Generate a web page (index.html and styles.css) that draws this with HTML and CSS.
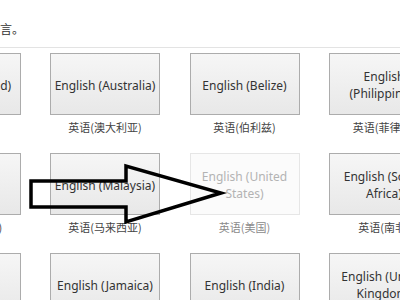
FILE: index.html
```html
<!DOCTYPE html>
<html lang="zh-CN">
<head>
  <meta charset="UTF-8">
  <title>语言</title>
  <link rel="stylesheet" href="styles.css">
</head>
<body>

<div class="intro">言。</div>

<div class="grid">
  <div class="cell">
    <div class="tile">English (Ireland)</div>
    <div class="label">英语(爱尔兰)</div>
  </div>
  <div class="cell">
    <div class="tile">English (Australia)</div>
    <div class="label">英语(澳大利亚)</div>
  </div>
  <div class="cell">
    <div class="tile">English (Belize)</div>
    <div class="label">英语(伯利兹)</div>
  </div>
  <div class="cell">
    <div class="tile">English<br>(Philippines)</div>
    <div class="label">英语(菲律宾)</div>
  </div>

  <div class="cell">
    <div class="tile">English<br>(Singapore)</div>
    <div class="label">英语(新加坡语)</div>
  </div>
  <div class="cell">
    <div class="tile">English (Malaysia)</div>
    <div class="label">英语(马来西亚)</div>
  </div>
  <div class="cell disabled">
    <div class="tile">English (United<br>States)</div>
    <div class="label">英语(美国)</div>
  </div>
  <div class="cell">
    <div class="tile">English (South<br>Africa)</div>
    <div class="label">英语(南非)</div>
  </div>

  <div class="cell">
    <div class="tile">English<br>(Canada)</div>
    <div class="label">英语(加拿大)</div>
  </div>
  <div class="cell">
    <div class="tile">English (Jamaica)</div>
    <div class="label">英语(牙买加)</div>
  </div>
  <div class="cell">
    <div class="tile">English (India)</div>
    <div class="label">英语(印度)</div>
  </div>
  <div class="cell">
    <div class="tile">English (United<br>Kingdom)</div>
    <div class="label">英语(英国)</div>
  </div>
</div>

<svg class="arrow" width="400" height="300" viewBox="0 0 400 300">
  <polygon points="31,181 126,181 126,166 221,193 126,222 126,207 31,207" />
</svg>

</body>
</html>
```

FILE: styles.css
```css
:root {
  --tile-border: #acacac;
  --text-color: #333;
  --label-color: #444;
  --rule-color: #e3e3e3;
}

html, body {
  margin: 0;
  height: 100%;
}

body {
  position: relative;
  overflow: hidden;
  background: #fff;
  font-family: "Noto Sans", "Noto Sans CJK SC", sans-serif;
  color: var(--text-color);
}

.intro {
  height: 48px;
  padding-top: 21px;
  box-sizing: border-box;
  font-family: "Noto Sans CJK SC", sans-serif;
  font-size: 12px;
  line-height: 16px;
  border-bottom: 1px solid var(--rule-color);
}

.grid {
  display: grid;
  grid-template-columns: repeat(4, 110px);
  column-gap: 29.5px;
  row-gap: 18px;
  margin: 5px 0 0 -89.5px;
}

.cell {
  display: flex;
  flex-direction: column;
  align-items: center;
}

.tile {
  width: 110px;
  height: 62px;
  box-sizing: border-box;
  display: flex;
  align-items: center;
  justify-content: center;
  text-align: center;
  white-space: nowrap;
  font-size: 12px;
  line-height: 17px;
  padding-top: 2px;
  border: 1px solid var(--tile-border);
  background: linear-gradient(#f6f6f6, #e8e8e8);
}

.label {
  margin-top: 4px;
  font-family: "Noto Sans CJK SC", sans-serif;
  font-size: 11px;
  line-height: 16px;
  color: var(--label-color);
  white-space: nowrap;
}

.disabled .tile {
  border-color: #e6e6e6;
  background: #fbfbfb;
  color: #b3b3b3;
}

.disabled .label {
  color: #8a8a8a;
}

.arrow {
  position: absolute;
  left: 0;
  top: 0;
  pointer-events: none;
}

.arrow polygon {
  fill: none;
  stroke: #000;
  stroke-width: 3.5;
  stroke-linejoin: miter;
}
```
